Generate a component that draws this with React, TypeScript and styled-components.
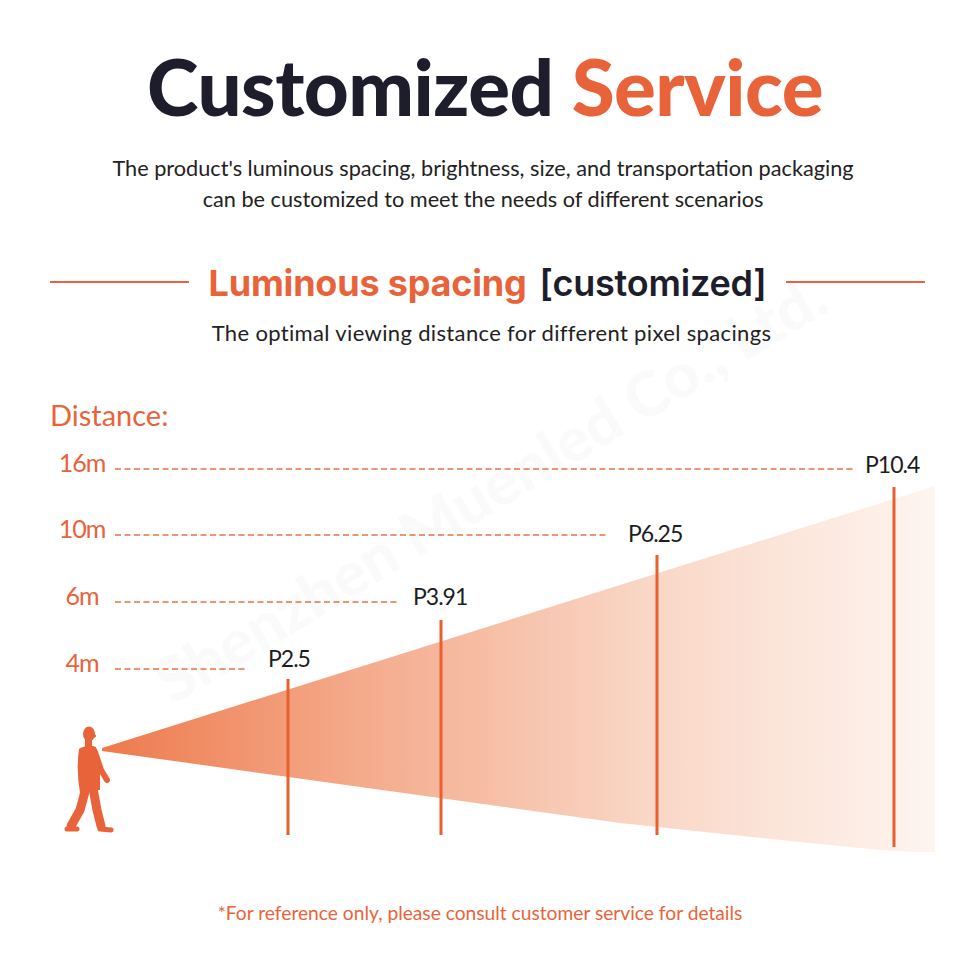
import React from "react";
import styled, { createGlobalStyle } from "styled-components";

const ORANGE = "#e9633a";
const DARK = "#1e1d2b";

const Global = createGlobalStyle`
  html, body { margin: 0; padding: 0; background: #ffffff; }
  body { font-family: Lato, "Noto Sans", sans-serif; }
`;

const Page = styled.div`
  position: relative;
  width: 960px;
  height: 960px;
  overflow: hidden;
  background: #ffffff;
  display: flex;
  flex-direction: column;
  align-items: stretch;
`;

const Title = styled.h1`
  margin: 47px 0 0;
  padding-left: 10px;
  font-family: Lato, sans-serif;
  font-weight: 900;
  font-size: 78px;
  line-height: 78px;
  text-align: center;
  color: ${DARK};
  letter-spacing: -0.5px;
`;

const Accent = styled.span`
  color: ${ORANGE};
`;

const Lead = styled.p`
  margin: 28px 0 0;
  padding-left: 6px;
  font-family: Lato, sans-serif;
  font-size: 21.7px;
  line-height: 31px;
  text-align: center;
  color: #222222;
`;

const SectionHead = styled.div`
  margin-top: 45px;
  display: flex;
  align-items: center;
  gap: 20px;
  padding: 0 35px 0 50px;
`;

const Rule = styled.div`
  flex: 1;
  height: 2px;
  background: ${ORANGE};
  margin-top: -2px;
`;

const SectionTitle = styled.h2`
  margin: 0;
  font-family: Inter, sans-serif;
  font-weight: 700;
  font-size: 36px;
  line-height: 46px;
  color: ${ORANGE};
  white-space: nowrap;
  letter-spacing: -0.2px;
`;

const Bracket = styled.span`
  color: ${DARK};
  font-weight: 600;
  margin-left: 4px;
`;

const SectionSub = styled.p`
  margin: 12px 0 0;
  padding-left: 23px;
  font-family: Lato, sans-serif;
  font-size: 22px;
  line-height: 30px;
  letter-spacing: 0.35px;
  text-align: center;
  color: #222222;
`;

const AxisTitle = styled.div`
  margin: 50px 0 0 50px;
  font-family: Lato, sans-serif;
  font-size: 29px;
  line-height: 34px;
  color: ${ORANGE};
`;

const Chart = styled.svg`
  display: block;
  width: 960px;
  height: 440px;
`;

const Footnote = styled.p`
  margin: 29px 0 0;
  font-family: Lato, sans-serif;
  font-size: 19.2px;
  line-height: 24px;
  text-align: center;
  color: ${ORANGE};
`;

const Watermark = styled.div`
  position: absolute;
  left: 40px;
  top: 450px;
  width: 900px;
  text-align: center;
  font-family: Lato, sans-serif;
  font-weight: 900;
  font-size: 62px;
  color: rgba(120, 120, 120, 0.04);
  transform: rotate(-31deg);
  transform-origin: center;
  pointer-events: none;
  white-space: nowrap;
`;

type Level = {
  label: string;
  y: number;
  lineEnd: number;
  pitch: string;
  px: number;
  py: number;
  barX: number;
  barTop: number;
  barBottom: number;
};

const levels: Level[] = [
  { label: "16m", y: 469, lineEnd: 855, pitch: "P10.4", px: 865, py: 473, barX: 894, barTop: 487, barBottom: 847 },
  { label: "10m", y: 535, lineEnd: 608, pitch: "P6.25", px: 628, py: 542, barX: 657, barTop: 555, barBottom: 835 },
  { label: "6m", y: 602, lineEnd: 398, pitch: "P3.91", px: 413, py: 605, barX: 441, barTop: 620, barBottom: 835 },
  { label: "4m", y: 669, lineEnd: 247, pitch: "P2.5", px: 268, py: 667, barX: 288, barTop: 679, barBottom: 835 },
];

function Walker() {
  return (
    <g fill={ORANGE} stroke={ORANGE} strokeLinecap="round" strokeLinejoin="round">
      <ellipse cx="89" cy="734" rx="6" ry="7.5" stroke="none" />
      <path d="M93,733 L96,736 L93,738 Z" strokeWidth="1" />
      <rect x="85" y="739" width="7" height="9" stroke="none" />
      <path d="M79,749 Q88,743 96,747 L100,762 L100,790 L80,793 Q76,770 79,749 Z" stroke="none" />
      <polyline points="95,752 101,770 107,780" fill="none" strokeWidth="6" />
      <polyline points="86,788 80,810 71,826" fill="none" strokeWidth="9" />
      <line x1="67" y1="829" x2="77" y2="829" strokeWidth="5" />
      <polyline points="93,788 97,810 101,826" fill="none" strokeWidth="9" />
      <line x1="100" y1="829" x2="111" y2="830" strokeWidth="5" />
    </g>
  );
}

export default function App() {
  return (
    <>
      <Global />
      <Page>
        <Title>
          Customized <Accent>Service</Accent>
        </Title>
        <Lead>
          The product's luminous spacing, brightness, size, and transportation packaging
          <br />
          can be customized to meet the needs of different scenarios
        </Lead>
        <SectionHead>
          <Rule />
          <SectionTitle>
            Luminous spacing<Bracket> [customized]</Bracket>
          </SectionTitle>
          <Rule />
        </SectionHead>
        <SectionSub>The optimal viewing distance for different pixel spacings</SectionSub>
        <AxisTitle>Distance:</AxisTitle>
        <Chart viewBox="0 432 960 440">
          <defs>
            <linearGradient id="cone" x1="102" y1="0" x2="935" y2="0" gradientUnits="userSpaceOnUse">
              <stop offset="0" stopColor="#ee7a4c" />
              <stop offset="0.3" stopColor="#f4a98a" />
              <stop offset="0.65" stopColor="#f9d6c5" />
              <stop offset="1" stopColor="#fef5f0" />
            </linearGradient>
          </defs>
          <path
            d="M102,748 L935,486 L935,852 Q905,852 880,850 Q760,838 620,823 L102,751 Z"
            fill="url(#cone)"
          />
          {levels.map((l) => (
            <g key={l.label}>
              <text
                x="82"
                y={l.y + 3}
                textAnchor="middle"
                fontFamily="Lato, sans-serif"
                fontSize="25"
                letterSpacing="-1"
                fill={ORANGE}
              >
                {l.label}
              </text>
              <line
                x1="115"
                y1={l.y}
                x2={l.lineEnd}
                y2={l.y}
                stroke="#ea7048"
                strokeWidth="1.3"
                strokeDasharray="6 3.5"
              />
              <text
                x={l.px}
                y={l.py}
                fontFamily="Lato, sans-serif"
                fontSize="23"
                letterSpacing="-1"
                fill="#1d1d1d"
              >
                {l.pitch}
              </text>
              <line x1={l.barX} y1={l.barTop} x2={l.barX} y2={l.barBottom} stroke="#e8602f" strokeWidth="3" />
            </g>
          ))}
          <Walker />
        </Chart>
        <Footnote>*For reference only, please consult customer service for details</Footnote>
        <Watermark>Shenzhen Muenled Co., Ltd.</Watermark>
      </Page>
    </>
  );
}
